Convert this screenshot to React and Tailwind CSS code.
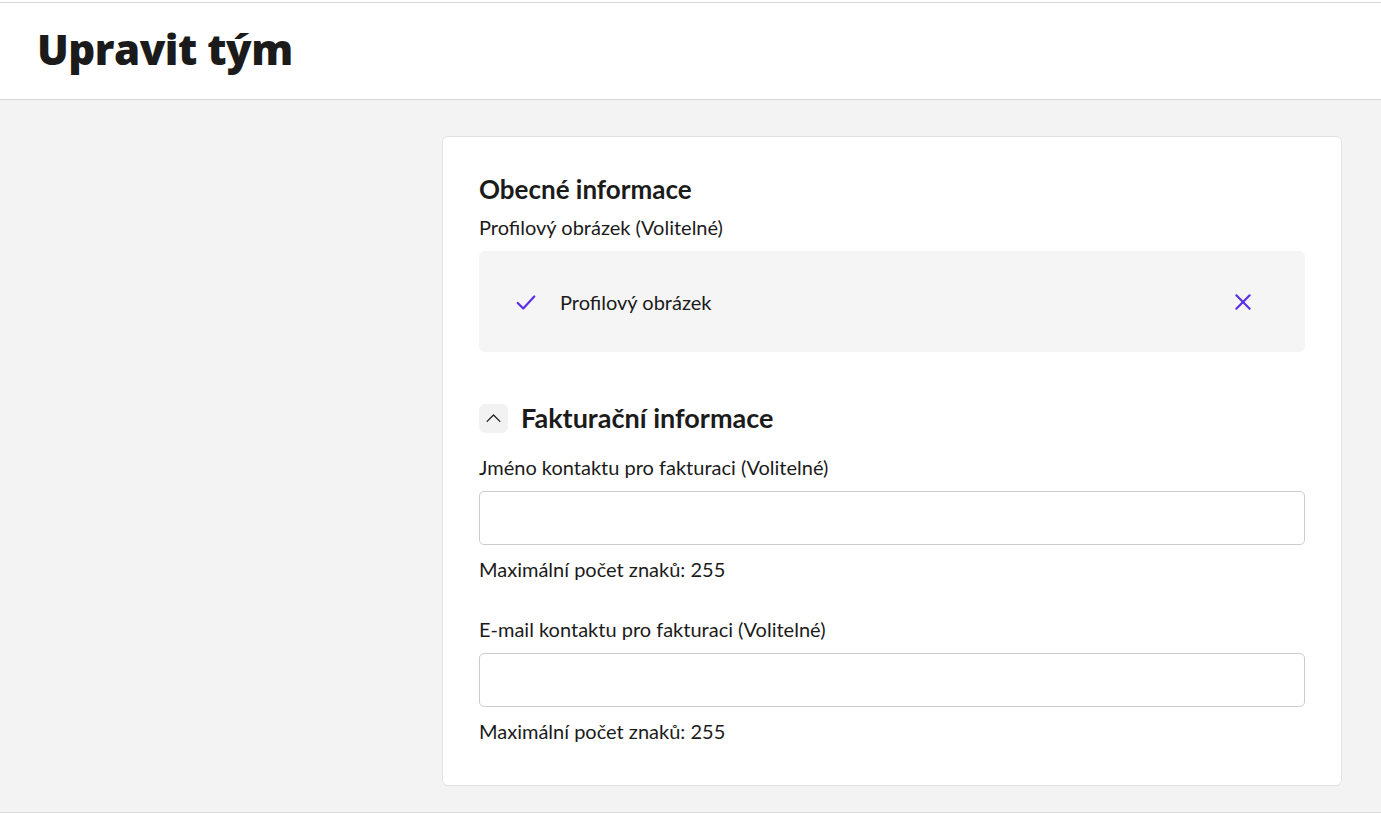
export default function App() {
  const body = { fontFamily: "Lato, 'Noto Sans', sans-serif" };
  return (
    <div className="min-h-[814px] bg-[#f3f3f3] flex flex-col" style={body}>
      <div className="h-[2px] bg-white" />
      <header className="bg-white border-t border-b border-[#d6d6d6] h-[98px] flex items-center px-[37px]">
        <h1
          className="text-[42px] font-extrabold text-[#1b1b1b] tracking-[-0.5px] leading-none -mt-1"
          style={{ fontFamily: "'Open Sans', 'Noto Sans', sans-serif" }}
        >
          Upravit tým
        </h1>
      </header>
      <main className="flex flex-1 pt-9 pb-[26px] pr-[39px]">
        <div className="w-[442px] shrink-0" />
        <section className="flex-1 bg-white border border-[#e2e2e2] rounded-md px-9 pt-9 pb-[42px] text-[#1b1b1b]">
          <h2 className="text-[26px] leading-8 font-bold">Obecné informace</h2>
          <p className="mt-2.5 text-[20px] leading-6">Profilový obrázek (Volitelné)</p>
          <div className="mt-3 h-[101px] bg-[#f5f5f5] rounded-md flex items-center pl-9 pr-[52px]">
            <svg width="22" height="22" viewBox="0 0 24 24" fill="none" stroke="#5b2ee8" strokeWidth="2.4" strokeLinecap="round" strokeLinejoin="round">
              <path d="M3 13l6 6L21 6" />
            </svg>
            <span className="ml-[23px] text-[20px] flex-1">Profilový obrázek</span>
            <svg width="20" height="20" viewBox="0 0 24 24" fill="none" stroke="#5b2ee8" strokeWidth="2.6" strokeLinecap="round">
              <path d="M4 4l16 16M20 4L4 20" />
            </svg>
          </div>
          <div className="mt-[50px] flex items-center">
            <div className="w-[29px] h-[29px] rounded-md bg-[#f2f2f2] flex items-center justify-center">
              <svg width="17" height="17" viewBox="0 0 24 24" fill="none" stroke="#1b1b1b" strokeWidth="1.8" strokeLinecap="round" strokeLinejoin="round">
                <path d="M3 16l9-9 9 9" />
              </svg>
            </div>
            <h2 className="ml-[13px] text-[27px] leading-8 font-bold">Fakturační informace</h2>
          </div>
          <label className="block mt-[21px] text-[20px] leading-6">Jméno kontaktu pro fakturaci (Volitelné)</label>
          <input className="mt-3 block w-full h-[54px] rounded-[5px] border border-[#cccccc] bg-white px-3 text-[18px] outline-none" />
          <p className="mt-3 text-[20px] leading-6">Maximální počet znaků: 255</p>
          <label className="block mt-9 text-[20px] leading-6">E-mail kontaktu pro fakturaci (Volitelné)</label>
          <input className="mt-3 block w-full h-[54px] rounded-[5px] border border-[#cccccc] bg-white px-3 text-[18px] outline-none" />
          <p className="mt-3 text-[20px] leading-6">Maximální počet znaků: 255</p>
        </section>
      </main>
      <div className="h-px bg-[#dcdcdc]" />
      <div className="h-px bg-white" />
    </div>
  );
}
